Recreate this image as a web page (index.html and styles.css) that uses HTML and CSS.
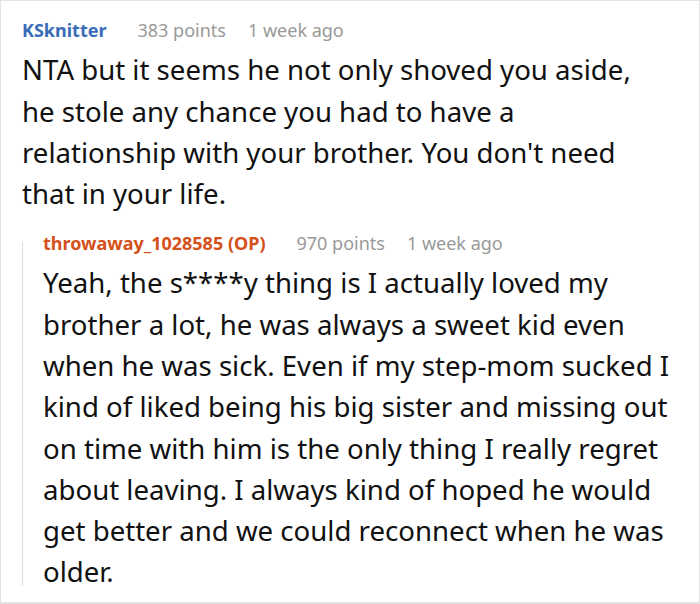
FILE: index.html
```html
<!DOCTYPE html>
<html>
<head>
<meta charset="utf-8">
<link rel="stylesheet" href="styles.css">
</head>
<body>
<div class="frame">
  <div class="comment">
    <div class="meta"><span class="user blue">KSknitter</span><span class="info">383 points</span><span class="info">1 week ago</span></div>
    <p class="body first">NTA but it seems he not only shoved you aside, he stole any chance you had to have a relationship with your brother. You don't need that in your life.</p>
    <div class="reply">
      <div class="meta"><span class="user orange">throwaway_1028585 (OP)</span><span class="info">970 points</span><span class="info">1 week ago</span></div>
      <p class="body">Yeah, the s****y thing is I actually loved my brother a lot, he was always a sweet kid even when he was sick. Even if my step-mom sucked I kind of liked being his big sister and missing out on time with him is the only thing I really regret about leaving. I always kind of hoped he would get better and we could reconnect when he was older.</p>
    </div>
  </div>
</div>
</body>
</html>
```
FILE: styles.css
```css
html, body { margin: 0; padding: 0; background: #fff; }
.frame {
  width: 700px;
  height: 604px;
  box-sizing: border-box;
  border: 1px solid #e3e3e3;
  border-bottom-width: 2px;
  overflow: hidden;
  font-family: "Noto Sans", sans-serif;
  color: #111;
}
.comment { padding: 9.6px 8px 0 21px; }
.meta { font-size: 18px; line-height: 38.8px; white-space: nowrap; }
.user { font-weight: bold; margin-right: 31px; }
.blue { color: #3a6bb8; }
.orange { color: #d5511b; }
.info { color: #999; margin-right: 22px; }
.body { margin: 0; font-size: 27.6px; line-height: 41.3px; }
.first { margin-right: 36px; }
.reply {
  display: flow-root;
  margin-top: 27.4px;
  border-left: 1px solid #dedede;
  padding-left: 20px;
}
.reply .meta { margin-top: -18.4px; }
.reply .body { margin-bottom: -6.8px; }
```
